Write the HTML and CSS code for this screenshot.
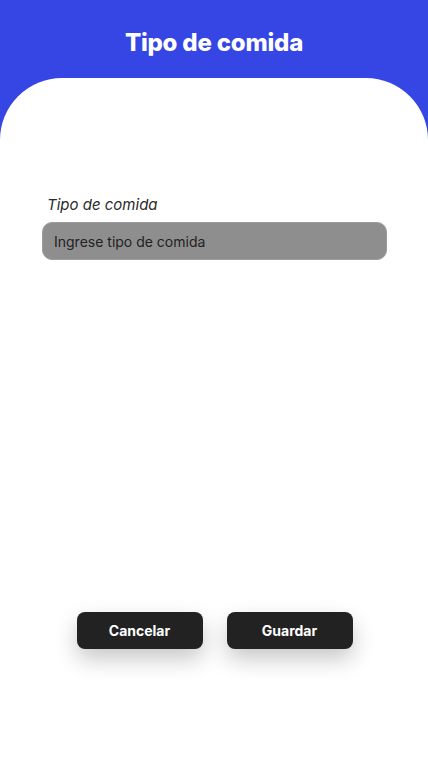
FILE: index.html
```html
<!DOCTYPE html>
<html lang="es">
<head>
<meta charset="utf-8">
<link rel="stylesheet" href="styles.css">
</head>
<body>
<div class="screen">
  <header class="header">
    <h1 class="title">Tipo de comida</h1>
  </header>
  <main class="card">
    <div class="field">
      <label class="label">Tipo de comida</label>
      <div class="input">Ingrese tipo de comida</div>
    </div>
    <div class="actions">
      <button class="btn">Cancelar</button>
      <button class="btn">Guardar</button>
    </div>
  </main>
</div>
</body>
</html>
```
FILE: styles.css
```css
html, body {
  margin: 0;
  padding: 0;
}
body {
  background: #3646e5;
  font-family: Inter, "Noto Sans", sans-serif;
}
.screen {
  width: 428px;
  height: 758px;
  display: flex;
  flex-direction: column;
  overflow: hidden;
}
.header {
  height: 78px;
  display: flex;
  justify-content: center;
  align-items: flex-start;
}
.title {
  margin: 27px 0 0;
  color: #fff;
  font-size: 24px;
  font-weight: 800;
  letter-spacing: -0.2px;
  line-height: 32px;
}
.card {
  flex: 1;
  background: #fff;
  border-radius: 62px 62px 0 0;
  display: flex;
  flex-direction: column;
  padding: 118px 41px 109px 42px;
}
.field {
  display: flex;
  flex-direction: column;
  gap: 8px;
}
.label {
  font-style: italic;
  font-size: 15px;
  font-weight: 400;
  color: #2a2a2a;
  padding-left: 5px;
  line-height: 18px;
}
.input {
  height: 38px;
  box-sizing: border-box;
  background: #8e8e8e;
  border: 1px solid #9c9c9c;
  border-radius: 10px;
  padding: 0 11px;
  display: flex;
  align-items: center;
  font-size: 14px;
  color: #222;
}
.actions {
  margin-top: auto;
  display: flex;
  justify-content: center;
  gap: 24px;
}
.btn {
  width: 126px;
  height: 37px;
  border: none;
  border-radius: 8px;
  background: #222;
  color: #fff;
  font-family: Inter, sans-serif;
  font-weight: 700;
  font-size: 14px;
  box-shadow: 0 10px 22px rgba(0,0,0,0.22);
}
```
